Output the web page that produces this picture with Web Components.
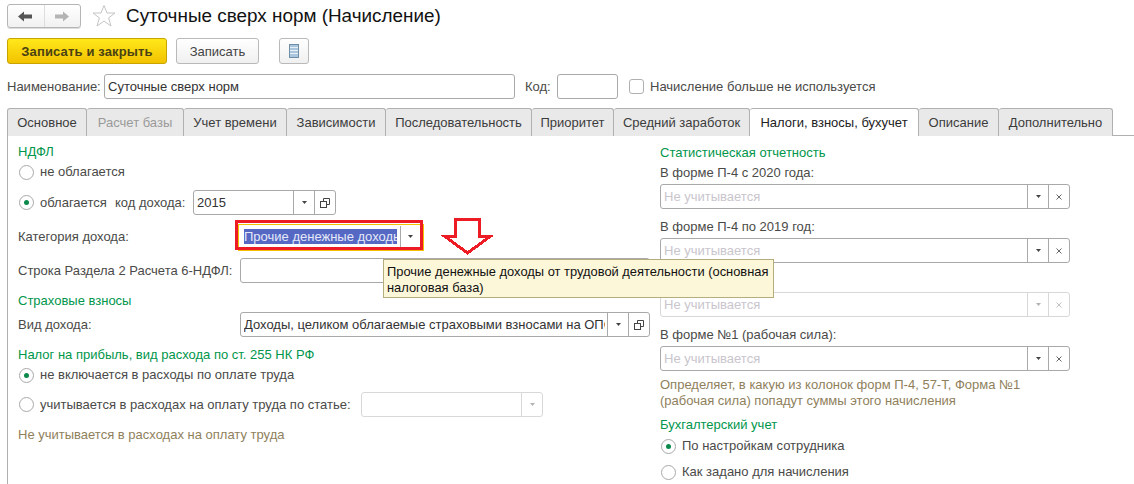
<!DOCTYPE html>
<html lang="ru">
<head>
<meta charset="utf-8">
<title>Суточные сверх норм</title>
<style>
  html, body { margin: 0; padding: 0; background: #fff; }
  body { font: 13px "Liberation Sans", Arial, sans-serif; color: #4a4a48; }
</style>
</head>
<body>
<pay-form>
  <form-header slot="header">Суточные сверх норм (Начисление)</form-header>
  <form-toolbar slot="toolbar"></form-toolbar>
  <name-row slot="name"></name-row>
  <tab-bar slot="tabs">
    <tab-item w="80">Основное</tab-item>
    <tab-item w="97" disabled>Расчет базы</tab-item>
    <tab-item w="103">Учет времени</tab-item>
    <tab-item w="99">Зависимости</tab-item>
    <tab-item w="146">Последовательность</tab-item>
    <tab-item w="82">Приоритет</tab-item>
    <tab-item w="136">Средний заработок</tab-item>
    <tab-item w="169" active>Налоги, взносы, бухучет</tab-item>
    <tab-item w="80">Описание</tab-item>
    <tab-item w="114">Дополнительно</tab-item>
  </tab-bar>

  <tab-panel slot="panel">
    <div slot="left">
      <group-title style="margin-top:1px">НДФЛ</group-title>
      <radio-item style="margin-top:4px">не облагается</radio-item>
      <form-row style="margin-top:10px">
        <radio-item style="width:97px" checked>облагается</radio-item>
        <field-label style="width:78px">код дохода:</field-label>
        <text-field style="width:143px" value="2015" buttons="drop open"></text-field>
      </form-row>
      <form-row style="margin-top:9px">
        <field-label style="width:222px">Категория дохода:</field-label>
        <text-field style="width:186px;margin-left:-2px" value="Прочие денежные доходы от трудовой деятельности" buttons="drop" focused></text-field>
      </form-row>
      <form-row style="margin-top:9px">
        <field-label style="width:222px">Строка Раздела 2 Расчета 6-НДФЛ:</field-label>
        <text-field style="width:410px"></text-field>
      </form-row>
      <group-title style="margin-top:10px">Страховые взносы</group-title>
      <form-row style="margin-top:3px">
        <field-label style="width:222px">Вид дохода:</field-label>
        <text-field style="width:410px" value="Доходы, целиком облагаемые страховыми взносами на ОПС, ОМС и ФСС" buttons="drop open"></text-field>
      </form-row>
      <group-title style="margin-top:10px">Налог на прибыль, вид расхода по ст. 255 НК РФ</group-title>
      <radio-item style="margin-top:4px" checked>не включается в расходы по оплате труда</radio-item>
      <form-row style="margin-top:9px">
        <radio-item style="width:343px">учитывается в расходах на оплату труда по статье:</radio-item>
        <text-field style="width:182px" buttons="drop" disabled></text-field>
      </form-row>
      <help-note style="margin-top:10px">Не учитывается в расходах на оплату труда</help-note>
    </div>

    <div slot="right">
      <group-title style="margin-top:2px">Статистическая отчетность</group-title>
      <field-label style="margin-top:4px">В форме П-4 с 2020 года:</field-label>
      <text-field style="margin-top:3px" placeholder="Не учитывается" buttons="drop clear"></text-field>
      <field-label style="margin-top:10px">В форме П-4 по 2019 год:</field-label>
      <text-field style="margin-top:3px" placeholder="Не учитывается" buttons="drop clear"></text-field>
      <field-label style="margin-top:10px"></field-label>
      <text-field style="margin-top:3px" placeholder="Не учитывается" buttons="drop clear" disabled></text-field>
      <field-label style="margin-top:10px">В форме №1 (рабочая сила):</field-label>
      <text-field style="margin-top:3px" placeholder="Не учитывается" buttons="drop clear"></text-field>
      <help-note style="margin-top:6px">Определяет, в какую из колонок форм П-4, 57-Т, Форма №1<br>(рабочая сила) попадут суммы этого начисления</help-note>
      <group-title style="margin-top:8px">Бухгалтерский учет</group-title>
      <radio-item style="margin-top:5px" checked>По настройкам сотрудника</radio-item>
      <radio-item style="margin-top:10px">Как задано для начисления</radio-item>
    </div>
  </tab-panel>

  <red-mark slot="overlay"></red-mark>
  <hint-box slot="overlay">Прочие денежные доходы от трудовой деятельности (основная<br>налоговая база)</hint-box>
</pay-form>

<script>
// Форма целиком
class PayForm extends HTMLElement {
    constructor() {
        super();
        this.attachShadow({ mode: 'open' });
        this.shadowRoot.innerHTML = `
            <style>
                :host {
                    display: flex;
                    flex-direction: column;
                    position: relative;
                    width: 1134px;
                    height: 484px;
                    overflow: hidden;
                    background: #fff;
                }
                .panel { flex: 1; display: flex; min-height: 0; }
            </style>
            <slot name="header"></slot>
            <slot name="toolbar"></slot>
            <slot name="name"></slot>
            <slot name="tabs"></slot>
            <div class="panel"><slot name="panel"></slot></div>
            <slot name="overlay"></slot>
        `;
    }
}

class FormHeader extends HTMLElement {
    constructor() {
        super();
        this.attachShadow({ mode: 'open' });
        this.shadowRoot.innerHTML = `
            <style>
                :host { display: flex; align-items: center; height: 24px; padding: 4px 0 0 7px; }
                .nav {
                    display: flex;
                    width: 74px;
                    height: 24px;
                    box-sizing: border-box;
                    border: 1px solid #b5b5b5;
                    border-radius: 3px;
                    background: linear-gradient(#fff, #f1f1f1);
                    box-shadow: 0 1px 0 #ddd;
                }
                .nav div { flex: 1; display: flex; align-items: center; justify-content: center; }
                .nav div + div { border-left: 1px solid #ddd; }
                .star { margin-left: 11px; display: block; }
                h1 {
                    margin: 0 0 0 10px;
                    font: 400 18.9px "Liberation Sans", Arial, sans-serif;
                    color: #111;
                    white-space: nowrap;
                }
            </style>
            <div class="nav">
                <div><svg width="15" height="11" viewBox="0 0 15 11"><path d="M0 5.5 6 0.5V3.5H14V7.5H6V10.5Z" fill="#555"/></svg></div>
                <div><svg width="15" height="11" viewBox="0 0 15 11"><path d="M14 5.5 8 0.5V3.5H0V7.5H8V10.5Z" fill="#b4b4b4"/></svg></div>
            </div>
            <svg class="star" width="24" height="24" viewBox="0 0 24 24"><path d="M12 1.5 15 9H23L16.6 13.9 19 22 12 17.2 5 22 7.4 13.9 1 9H9Z" fill="#fff" stroke="#c4c4c4"/></svg>
            <h1><slot></slot></h1>
        `;
    }
}

class FormToolbar extends HTMLElement {
    constructor() {
        super();
        this.attachShadow({ mode: 'open' });
        this.shadowRoot.innerHTML = `
            <style>
                :host { display: flex; height: 26px; margin: 10px 0 0 7px; }
                .btn {
                    display: flex;
                    align-items: center;
                    justify-content: center;
                    box-sizing: border-box;
                    height: 26px;
                    border: 1px solid #b9b9b9;
                    border-radius: 3px;
                    background: linear-gradient(#fff, #f0f0f0);
                    font-size: 13px;
                    color: #444;
                }
                .main {
                    width: 160px;
                    border-color: #c8a400;
                    background: linear-gradient(#ffe81a, #f2c200);
                    font-weight: bold;
                    letter-spacing: .15px;
                    color: #4a4214;
                }
                .save { width: 83px; margin-left: 9px; }
                .icon { width: 30px; margin-left: 20px; }
            </style>
            <div class="btn main">Записать и закрыть</div>
            <div class="btn save">Записать</div>
            <div class="btn icon">
                <svg width="10" height="14" viewBox="0 0 10 14">
                    <rect x="0.5" y="0.5" width="9" height="13" fill="#a9c6de" stroke="#6f8fa8"/>
                    <path d="M1 3.5H9M1 6.5H9M1 9.5H9" stroke="#e8f0f6"/>
                </svg>
            </div>
        `;
    }
}

class NameRow extends HTMLElement {
    constructor() {
        super();
        this.attachShadow({ mode: 'open' });
        this.shadowRoot.innerHTML = `
            <style>
                :host { display: flex; align-items: center; height: 25px; margin: 10px 0 0 7px; }
                .lbl { width: 97px; }
                .code { margin-left: 10px; width: 32px; }
                .check {
                    width: 15px;
                    height: 15px;
                    box-sizing: border-box;
                    margin: 0 6px 0 11px;
                    border: 1px solid #b0b0b0;
                    border-radius: 3px;
                    background: #fff;
                }
            </style>
            <span class="lbl">Наименование:</span>
            <text-field style="width:411px" value="Суточные сверх норм"></text-field>
            <span class="code">Код:</span>
            <text-field style="width:61px"></text-field>
            <span class="check"></span>
            <span>Начисление больше не используется</span>
        `;
    }
}

class TabBar extends HTMLElement {
    constructor() {
        super();
        this.attachShadow({ mode: 'open' });
        this.shadowRoot.innerHTML = `
            <style>
                :host { display: flex; height: 28px; margin: 9px 0 0 7px; box-sizing: border-box; border-bottom: 1px solid #b0b0b0; }
            </style>
            <slot></slot>
        `;
    }
}

class TabItem extends HTMLElement {
    constructor() {
        super();
        this.attachShadow({ mode: 'open' });
        this.shadowRoot.innerHTML = `
            <style>
                :host {
                    display: flex;
                    align-items: center;
                    justify-content: center;
                    box-sizing: border-box;
                    height: 28px;
                    border: 1px solid #b0b0b0;
                    border-left-width: 0;
                    border-bottom-width: 0;
                    border-radius: 3px 3px 0 0;
                    background: #e9e9e9;
                    color: #3c3c3c;
                    white-space: nowrap;
                    padding-bottom: 1px;
                }
                :host(:first-child) { border-left-width: 1px; }
                :host([disabled]) { color: #9a9a9a; }
                :host([active]) { background: #fff; color: #222; }
            </style>
            <slot></slot>
        `;
    }
    connectedCallback() {
        this.style.width = this.getAttribute('w') + 'px';
    }
}

class TabPanel extends HTMLElement {
    constructor() {
        super();
        this.attachShadow({ mode: 'open' });
        this.shadowRoot.innerHTML = `
            <style>
                :host {
                    display: grid;
                    grid-template-columns: 632px 410px;
                    column-gap: 10px;
                    align-content: start;
                    flex: 1;
                    margin: -1px 0 0 7px;
                    padding: 8px 0 0 10px;
                    border-left: 1px solid #b0b0b0;
                }
            </style>
            <slot name="left"></slot>
            <slot name="right"></slot>
        `;
    }
}

class FormRow extends HTMLElement {
    constructor() {
        super();
        this.attachShadow({ mode: 'open' });
        this.shadowRoot.innerHTML = `
            <style>
                :host { display: flex; align-items: center; height: 25px; }
            </style>
            <slot></slot>
        `;
    }
}

class GroupTitle extends HTMLElement {
    constructor() {
        super();
        this.attachShadow({ mode: 'open' });
        this.shadowRoot.innerHTML = `
            <style>
                :host { display: block; height: 16px; line-height: 16px; color: #00964b; white-space: nowrap; }
            </style>
            <slot></slot>
        `;
    }
}

class FieldLabel extends HTMLElement {
    constructor() {
        super();
        this.attachShadow({ mode: 'open' });
        this.shadowRoot.innerHTML = `
            <style>
                :host { display: block; height: 16px; line-height: 16px; white-space: nowrap; flex: none; }
            </style>
            <slot></slot>
        `;
    }
}

class HelpNote extends HTMLElement {
    constructor() {
        super();
        this.attachShadow({ mode: 'open' });
        this.shadowRoot.innerHTML = `
            <style>
                :host { display: block; line-height: 16px; color: #8f7f5c; white-space: nowrap; }
            </style>
            <slot></slot>
        `;
    }
}

class RadioItem extends HTMLElement {
    constructor() {
        super();
        this.attachShadow({ mode: 'open' });
        this.shadowRoot.innerHTML = `
            <style>
                :host { display: flex; align-items: center; height: 16px; line-height: 16px; white-space: nowrap; flex: none; }
                svg { display: block; margin: 0 6px 0 1px; flex: none; }
                .dot { display: none; }
                :host([checked]) .dot { display: block; }
            </style>
            <svg width="15" height="15" viewBox="0 0 15 15">
                <circle cx="7.5" cy="7.5" r="7" fill="#fff" stroke="#a8a8a8"/>
                <circle class="dot" cx="7.5" cy="7.5" r="2.5" fill="#0c8a4c"/>
            </svg>
            <slot></slot>
        `;
    }
}

class TextField extends HTMLElement {
    constructor() {
        super();
        this.attachShadow({ mode: 'open' });
        this.shadowRoot.innerHTML = `
            <style>
                :host {
                    display: flex;
                    box-sizing: border-box;
                    height: 25px;
                    flex: none;
                    border: 1px solid #a9a9a9;
                    border-radius: 3px;
                    background: #fff;
                    color: #333;
                }
                :host([disabled]) { border-color: #d8d8d8; }
                :host([focused]) {
                    border-color: #f2c200;
                    border-radius: 0;
                    box-shadow: 0 2px 0 #f2c200;
                }
                .wrap { flex: 1; min-width: 0; padding: 0 2px 0 3px; }
                :host([focused]) .wrap { padding-left: 5px; }
                .val {
                    overflow: hidden;
                    white-space: nowrap;
                    line-height: 23px;
                }
                .val.ph { color: #c9c5cd; }
                mark {
                    display: block;
                    width: 153px;
                    overflow: hidden;
                    margin-top: 4px;
                    background: #5468c4;
                    color: #e6e9f8;
                    line-height: 15px;
                }
                .b {
                    flex: none;
                    width: 21px;
                    display: flex;
                    align-items: center;
                    justify-content: center;
                    box-sizing: border-box;
                    border-left: 1px solid #a9a9a9;
                }
                :host([focused]) .b { width: 23px; margin: 1px 0; padding-right: 3px; }
                :host([disabled]) .b { border-left-color: #d8d8d8; }
                :host([disabled]) svg { opacity: .4; }
            </style>
            <div class="wrap"><div class="val"></div></div>
        `;
    }
    connectedCallback() {
        const val = this.shadowRoot.querySelector('.val');
        const value = this.getAttribute('value');
        const placeholder = this.getAttribute('placeholder');

        if (this.hasAttribute('focused')) {
            const mark = document.createElement('mark');
            mark.textContent = value;
            val.appendChild(mark);
        } else if (value) {
            val.textContent = value;
        } else if (placeholder) {
            val.textContent = placeholder;
            val.classList.add('ph');
        }

        const icons = {
            drop: '<svg width="5" height="3" viewBox="0 0 5 3"><path d="M0 0H5L2.5 3Z" fill="#444"/></svg>',
            open: '<svg width="10" height="10" viewBox="0 0 10 10" fill="none" stroke="#444"><path d="M3.5 3V0.5H9.5V6.5H6.5"/><rect x="0.5" y="3.5" width="6" height="6"/></svg>',
            clear: '<svg width="6" height="6" viewBox="0 0 6 6" stroke="#666"><path d="M0.5 0.5 5.5 5.5M5.5 0.5 0.5 5.5"/></svg>'
        };
        (this.getAttribute('buttons') || '').split(' ').filter(Boolean).forEach(name => {
            const b = document.createElement('div');
            b.className = 'b';
            b.innerHTML = icons[name];
            this.shadowRoot.appendChild(b);
        });
    }
}

// Красная рамка и стрелка поверх скриншота
class RedMark extends HTMLElement {
    constructor() {
        super();
        this.attachShadow({ mode: 'open' });
        this.shadowRoot.innerHTML = `
            <style>
                :host { position: absolute; left: 0; top: 0; width: 0; height: 0; }
                .box {
                    position: absolute;
                    left: 235px;
                    top: 220px;
                    width: 188px;
                    height: 30px;
                    box-sizing: border-box;
                    border: 3px solid #ed1c24;
                }
                svg { position: absolute; left: 441px; top: 216px; }
            </style>
            <div class="box"></div>
            <svg width="52" height="40" viewBox="0 0 52 40">
                <path d="M14.5 3.5H38.5V20.5H49L26.5 37 4 20.5H14.5Z" fill="#fff" stroke="#ed1c24" stroke-width="3" shape-rendering="crispEdges"/>
            </svg>
        `;
    }
}

class HintBox extends HTMLElement {
    constructor() {
        super();
        this.attachShadow({ mode: 'open' });
        this.shadowRoot.innerHTML = `
            <style>
                :host {
                    position: absolute;
                    left: 383px;
                    top: 259px;
                    width: 391px;
                    height: 39px;
                    box-sizing: border-box;
                    padding: 4px 0 4px 3px;
                    border: 1px solid #b5ad7e;
                    background: #fdf7d9;
                    color: #111;
                    font-size: 12.9px;
                    line-height: 16px;
                    white-space: nowrap;
                }
            </style>
            <slot></slot>
        `;
    }
}

customElements.define('pay-form', PayForm);
customElements.define('form-header', FormHeader);
customElements.define('form-toolbar', FormToolbar);
customElements.define('name-row', NameRow);
customElements.define('tab-bar', TabBar);
customElements.define('tab-item', TabItem);
customElements.define('tab-panel', TabPanel);
customElements.define('form-row', FormRow);
customElements.define('group-title', GroupTitle);
customElements.define('field-label', FieldLabel);
customElements.define('help-note', HelpNote);
customElements.define('radio-item', RadioItem);
customElements.define('text-field', TextField);
customElements.define('red-mark', RedMark);
customElements.define('hint-box', HintBox);
</script>
</body>
</html>
